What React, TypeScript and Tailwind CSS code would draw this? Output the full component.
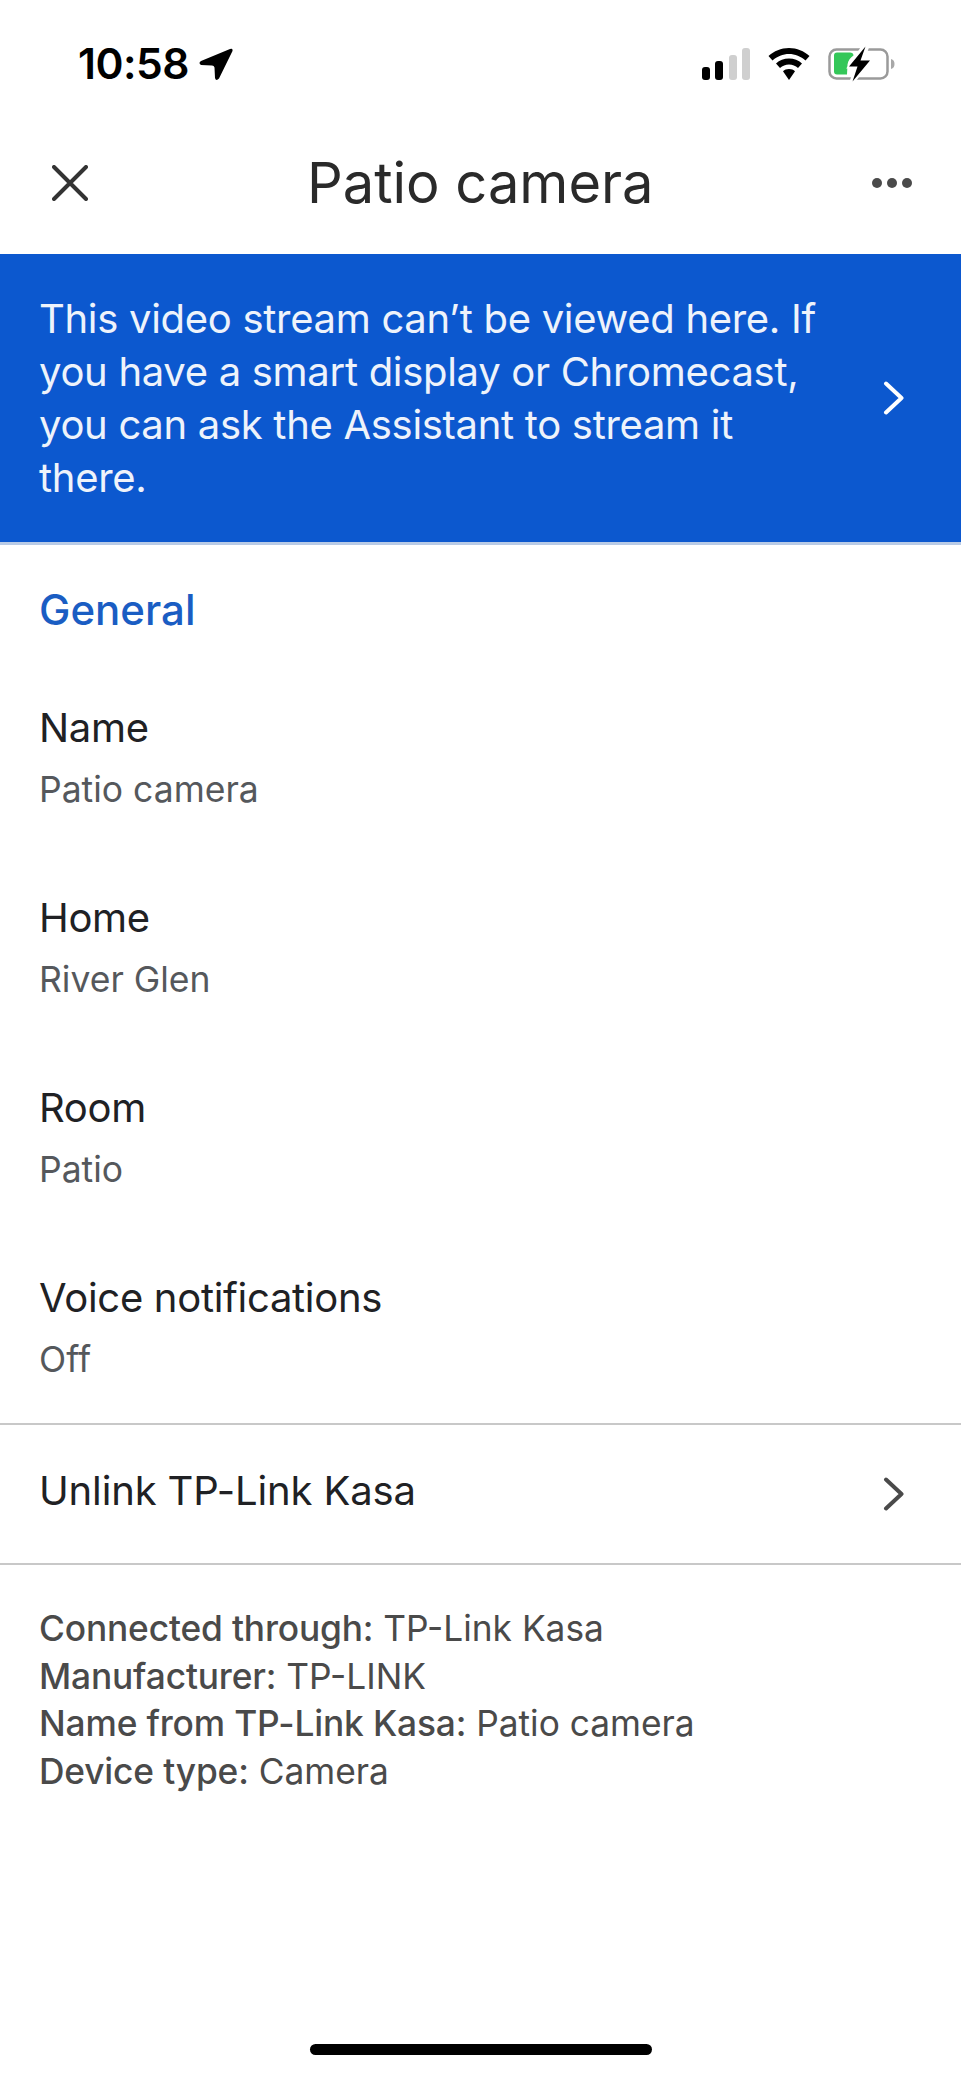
import React from 'react';

const font = { fontFamily: 'Inter, sans-serif' };

const Chevron = ({ className }: { className: string }) => (
  <svg width="22" height="34" viewBox="0 0 22 34" fill="none" className={className}>
    <path d="M3 2.5 L18.5 17 L3 31.5" stroke="currentColor" strokeWidth="4" strokeLinecap="round" strokeLinejoin="round" />
  </svg>
);

const StatusIcons = () => (
  <div className="flex items-center">
    <svg width="48" height="32" viewBox="0 0 48 32" className="mr-[18px]">
      <rect x="0" y="19" width="8" height="13" rx="3" fill="#000" />
      <rect x="13" y="13" width="8" height="19" rx="3" fill="#000" />
      <rect x="27" y="7" width="8" height="25" rx="3" fill="#cfcfcf" />
      <rect x="40" y="0" width="8" height="32" rx="3" fill="#cfcfcf" />
    </svg>
    <svg width="42" height="32" viewBox="0 0 42 32" className="mr-[18px]">
      <path d="M21 0C13 0 6 3 0.5 8l4 4.5C9 8.500 15 6 21 6s12 2.500 16.500 6.500l4-4.500C36 3 29 0 21 0z" fill="#000" />
      <path d="M21 10.500c-5 0-9.500 1.800-13 5l4 4.500c2.500-2.200 5.500-3.500 9-3.500s6.500 1.300 9 3.500l4-4.500c-3.500-3.200-8-5-13-5z" fill="#000" />
      <path d="M21 21c-2.500 0-4.500 0.800-6 2.200L21 32l6-8.800C25.500 21.800 23.500 21 21 21z" fill="#000" />
    </svg>
    <svg width="68" height="36" viewBox="0 0 68 36">
      <rect x="1.500" y="3.500" width="58" height="29" rx="7" fill="none" stroke="#9a9a9a" strokeWidth="2.500" />
      <path d="M63 13c2.500 0.500 3.500 2.500 3.500 5s-1 4.500-3.500 5z" fill="#a8a8a8" />
      <path d="M9 6.500h13c2 0 3.500 1 3.500 3 -3 2-5.500 5-6 9l-0.500 10H9c-2 0-3-1-3-3v-16c0-2 1-3 3-3z" fill="#34c759" />
      <path d="M21 21 L34 2 L40 0 L34.500 14.500 H42 L26 35 L23 36 L28 21z" fill="#fff" stroke="#fff" strokeWidth="3" />
      <path d="M21 20.500 L37.500 0.500 L32.500 14.500 H42 L24.500 35.500 L29.500 20.500z" fill="#000" />
    </svg>
  </div>
);

const SettingRow = ({ label, value }: { label: string; value: string }) => (
  <div className="h-[190px] last:h-[150px]">
    <div className="text-[40px] leading-[50px] tracking-[-0.3px] text-[#202124]">{label}</div>
    <div className="mt-[13px] text-[35.500px] leading-[48px] text-[#55585c]">{value}</div>
  </div>
);

const DetailLine = ({ label, value }: { label: string; value: string }) => (
  <div className="h-[47.500px] text-[35.300px] leading-[47.500px] text-[#4a4a4a]">
    <span className="font-medium tracking-[-0.15px]">{label}:</span> {value}
  </div>
);

export default function App() {
  return (
    <div className="relative flex h-[2080px] w-[961px] flex-col overflow-hidden bg-white" style={font}>
      <div className="flex h-[100px] items-center justify-between pl-[78px] pr-[65px] pt-[28px]">
        <div className="flex items-center">
          <span className="text-[42.500px] font-semibold tracking-[-0.5px] text-black">10:58</span>
          <svg width="34" height="33" viewBox="0 0 34 33" className="ml-[10px]">
            <path d="M31 1 Q34 0 33.500 3 L20 30.500 Q17 33.500 16 30 L15.500 19.500 Q15 17.500 13 17.500 L2 17 Q-1 15 2 13 Z" fill="#000" />
          </svg>
        </div>
        <StatusIcons />
      </div>

      <div className="flex h-[154px] items-center justify-between pl-[52px] pr-[49px] pt-[12px]">
        <svg width="36" height="36" viewBox="0 0 36 36" fill="none">
          <path d="M2 2 L34 34 M34 2 L2 34" stroke="#333" strokeWidth="4" strokeLinecap="round" />
        </svg>
        <h1 className="text-[56px] font-normal leading-none text-[#2a2a2a]">Patio camera</h1>
        <div className="flex gap-[5.500px]">
          <span className="h-[9.500px] w-[9.500px] rounded-full bg-[#4a4a4a]" />
          <span className="h-[9.500px] w-[9.500px] rounded-full bg-[#4a4a4a]" />
          <span className="h-[9.500px] w-[9.500px] rounded-full bg-[#4a4a4a]" />
        </div>
      </div>

      <div className="flex h-[291px] items-center justify-between border-b-[3px] border-[#b9cbe6] bg-[#0c58cf] pl-[39px] pr-[56px]">
        <p className="w-[800px] text-[40px] leading-[53px] tracking-[-0.3px] text-[#eef3fb]">
          This video stream can’t be viewed here. If you have a smart display or Chromecast, you can ask the Assistant to stream it there.
        </p>
        <Chevron className="text-white" />
      </div>

      <div className="px-[39px]">
        <div className="mb-[68px] mt-[40px] text-[42px] font-medium leading-[50px] text-[#1a5dc3]">General</div>
        <SettingRow label="Name" value="Patio camera" />
        <SettingRow label="Home" value="River Glen" />
        <SettingRow label="Room" value="Patio" />
        <SettingRow label="Voice notifications" value="Off" />
      </div>

      <div className="flex h-[142px] items-center justify-between border-y-2 border-[#c8c8c8] pl-[39px] pr-[56px]">
        <span className="mb-[6px] text-[40px] tracking-[-0.15px] text-[#202124]">Unlink TP-Link Kasa</span>
        <Chevron className="text-[#4a4a4a]" />
      </div>

      <div className="px-[39px] pt-[40px]">
        <DetailLine label="Connected through" value="TP-Link Kasa" />
        <DetailLine label="Manufacturer" value="TP-LINK" />
        <DetailLine label="Name from TP-Link Kasa" value="Patio camera" />
        <DetailLine label="Device type" value="Camera" />
      </div>

      <div className="absolute bottom-[25px] left-[310px] h-[11px] w-[342px] rounded-full bg-black" />
    </div>
  );
}
